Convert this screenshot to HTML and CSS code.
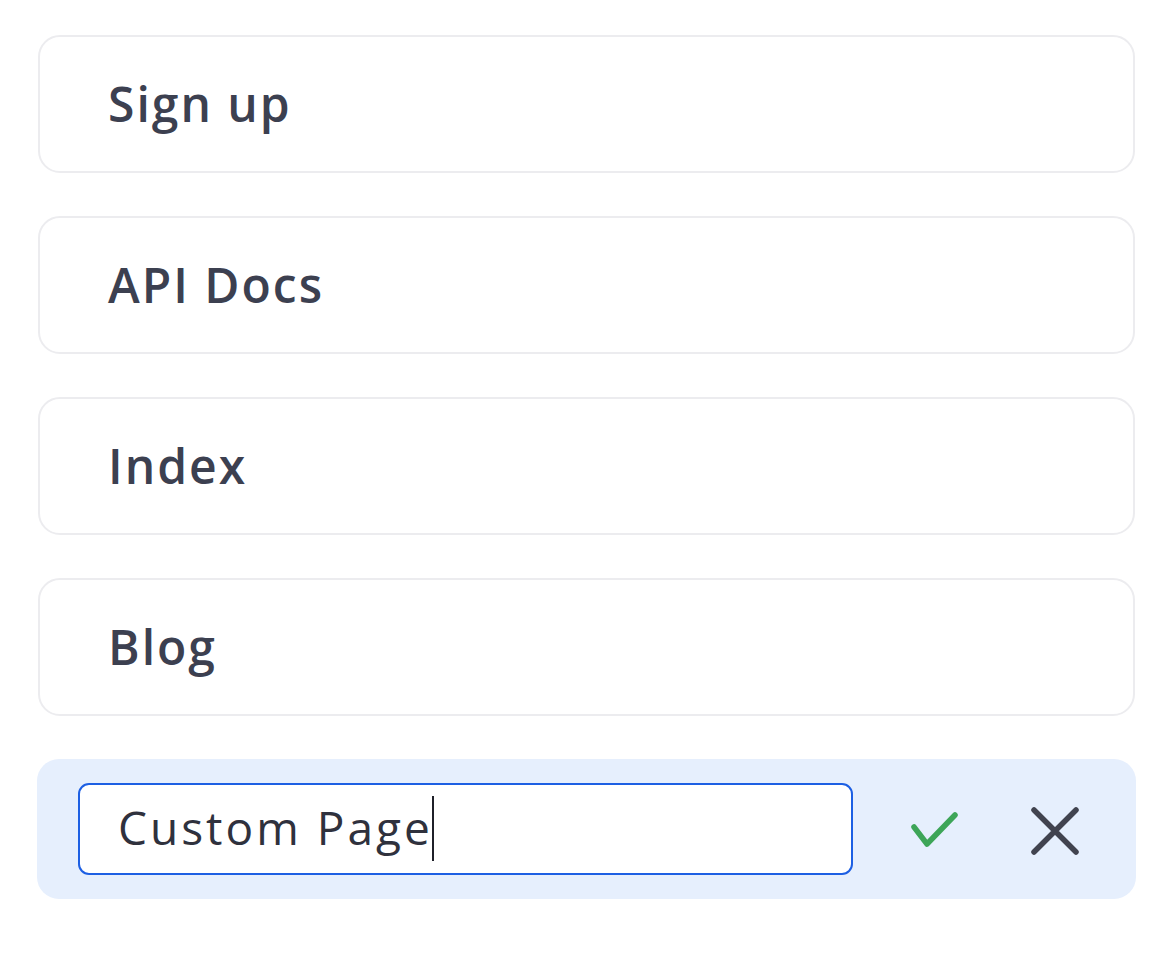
FILE: index.html
```html
<!DOCTYPE html>
<html lang="en">
<head>
<meta charset="utf-8">
<title>Pages</title>
<link rel="stylesheet" href="styles.css">
</head>
<body>
<div class="list">
  <div class="card"><span class="label">Sign up</span></div>
  <div class="card"><span class="label">API Docs</span></div>
  <div class="card"><span class="label">Index</span></div>
  <div class="card"><span class="label">Blog</span></div>
  <div class="edit-row">
    <div class="field"><span class="field-text">Custom Page</span><span class="caret"></span></div>
    <button class="icon-btn confirm" type="button" aria-label="Save">
      <svg width="48" height="36" viewBox="0 0 48 36"><polyline points="4,16 17,33 45,4" fill="none" stroke="#3da558" stroke-width="5.5" stroke-linecap="round" stroke-linejoin="round"/></svg>
    </button>
    <button class="icon-btn cancel" type="button" aria-label="Cancel">
      <svg width="50" height="50" viewBox="0 0 50 50"><path d="M4 4 L46 46 M46 4 L4 46" fill="none" stroke="#41434f" stroke-width="5.5" stroke-linecap="round"/></svg>
    </button>
  </div>
</div>
</body>
</html>
```
FILE: styles.css
```css
* { box-sizing: border-box; }
html, body { margin: 0; padding: 0; background: #ffffff; }
body { font-family: "Open Sans", "Liberation Sans", sans-serif; }

.list {
  display: flex;
  flex-direction: column;
  gap: 43px;
  padding: 35px 41px 0 38px;
  width: 1176px;
}

.card {
  height: 138px;
  border: 2px solid #ececef;
  border-radius: 22px;
  display: flex;
  align-items: center;
  padding-left: 68px;
  background: #ffffff;
}

.label {
  font-size: 48px;
  font-weight: 600;
  letter-spacing: 2px;
  color: #3c4050;
  line-height: 1;
}

.edit-row {
  margin-left: -1px;
  margin-right: -1px;
  height: 140px;
  background: #e6effd;
  border-radius: 22px;
  display: flex;
  align-items: center;
  padding-left: 41px;
}

.field {
  width: 775px;
  height: 92px;
  border: 2px solid #1d5fe3;
  border-radius: 11px;
  background: #ffffff;
  display: flex;
  align-items: center;
  padding-left: 38px;
}

.field-text {
  font-size: 46px;
  font-weight: 400;
  letter-spacing: 3px;
  color: #2f313d;
  line-height: 1;
  margin-top: -4px;
}

.caret {
  display: inline-block;
  width: 2px;
  height: 65px;
  background: #1f2029;
  margin-left: -1px;
  margin-top: -2px;
}

.icon-btn {
  border: 0;
  padding: 0;
  background: transparent;
  display: flex;
  align-items: center;
  justify-content: center;
}

.confirm { margin-left: 57px; }
.cancel { margin-left: 72px; margin-top: 4px; }
```
